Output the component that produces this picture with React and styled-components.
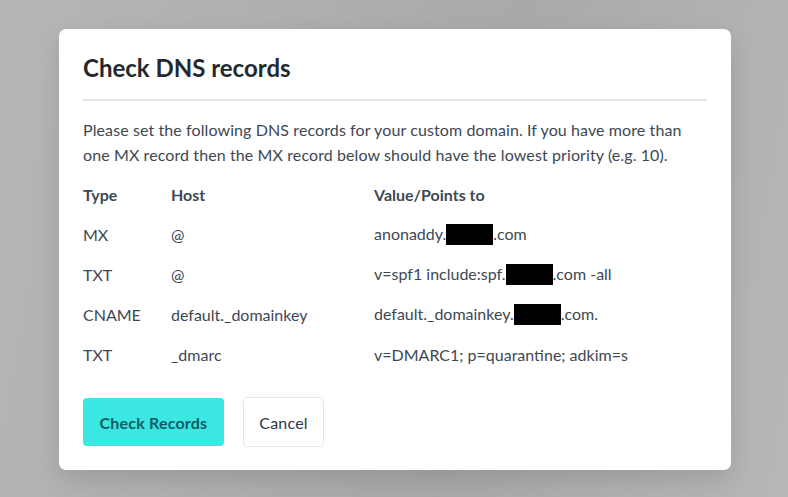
import styled, { createGlobalStyle } from "styled-components";

const GlobalStyle = createGlobalStyle`
  html, body {
    margin: 0;
    padding: 0;
    height: 100%;
  }
  body {
    background: linear-gradient(100deg, #b6b6b8 0%, #a9a9ab 60%, #b7b7b9 100%);
    font-family: Lato, "Liberation Sans", sans-serif;
    color: #3d4852;
  }
`;

const Overlay = styled.div`
  width: 788px;
  height: 497px;
  padding: 29px 0 0 59px;
  box-sizing: border-box;
`;

const Modal = styled.div`
  width: 672px;
  height: 441px;
  box-sizing: border-box;
  background: #fff;
  border-radius: 7px;
  padding: 24px;
  box-shadow: 0 10px 25px rgba(0, 0, 0, 0.12);
`;

const Title = styled.h2`
  margin: 0;
  font-size: 24px;
  line-height: 30px;
  font-weight: 700;
  color: #22292f;
`;

const Divider = styled.hr`
  margin: 16px 0 0;
  border: 0;
  height: 2px;
  background: #e5e7eb;
`;

const Intro = styled.p`
  margin: 17px 0 0;
  max-width: 605px;
  font-size: 16px;
  line-height: 24.5px;
  letter-spacing: 0.1px;
`;

const Table = styled.div`
  margin-top: 7px;
  display: grid;
  grid-template-columns: 88px 203px 1fr;
  grid-auto-rows: 40px;
  align-items: center;
  font-size: 16px;
`;

const Cell = styled.div`
  font-weight: ${(p) => (p.$head ? 700 : 400)};
  white-space: nowrap;
`;

const Redacted = styled.span`
  display: inline-block;
  width: ${(p) => p.$w}px;
  height: 21px;
  background: #000;
  vertical-align: -5px;
`;

const Actions = styled.div`
  margin-top: 23px;
  display: flex;
  align-items: center;
  gap: 19px;
`;

const Button = styled.button`
  font-family: inherit;
  font-size: 16px;
  letter-spacing: 0.2px;
  border-radius: 4px;
  cursor: pointer;
  font-weight: ${(p) => (p.$primary ? 700 : 400)};
  height: ${(p) => (p.$primary ? "48px" : "50px")};
  padding: 0 ${(p) => (p.$primary ? "16.5px" : "15.5px")};
  background: ${(p) => (p.$primary ? "#3ae7e1" : "#fff")};
  color: ${(p) => (p.$primary ? "#0f5b66" : "#2d3748")};
  border: ${(p) => (p.$primary ? "none" : "1px solid #e5e7eb")};
`;

const records = [
  { type: "MX", host: "@", value: <>anonaddy.<Redacted $w={47} />.com</> },
  { type: "TXT", host: "@", value: <>v=spf1 include:spf.<Redacted $w={47} />.com -all</> },
  { type: "CNAME", host: "default._domainkey", value: <>default._domainkey.<Redacted $w={47} />.com.</> },
  { type: "TXT", host: "_dmarc", value: "v=DMARC1; p=quarantine; adkim=s" },
];

export default function App() {
  return (
    <>
      <GlobalStyle />
      <Overlay>
        <Modal>
          <Title>Check DNS records</Title>
          <Divider />
          <Intro>
            Please set the following DNS records for your custom domain. If you have more than
            one MX record then the MX record below should have the lowest priority (e.g. 10).
          </Intro>
          <Table>
            <Cell $head>Type</Cell>
            <Cell $head>Host</Cell>
            <Cell $head>Value/Points to</Cell>
            {records.map((r, i) => [
              <Cell key={`t${i}`}>{r.type}</Cell>,
              <Cell key={`h${i}`}>{r.host}</Cell>,
              <Cell key={`v${i}`}>{r.value}</Cell>,
            ])}
          </Table>
          <Actions>
            <Button $primary>Check Records</Button>
            <Button>Cancel</Button>
          </Actions>
        </Modal>
      </Overlay>
    </>
  );
}
